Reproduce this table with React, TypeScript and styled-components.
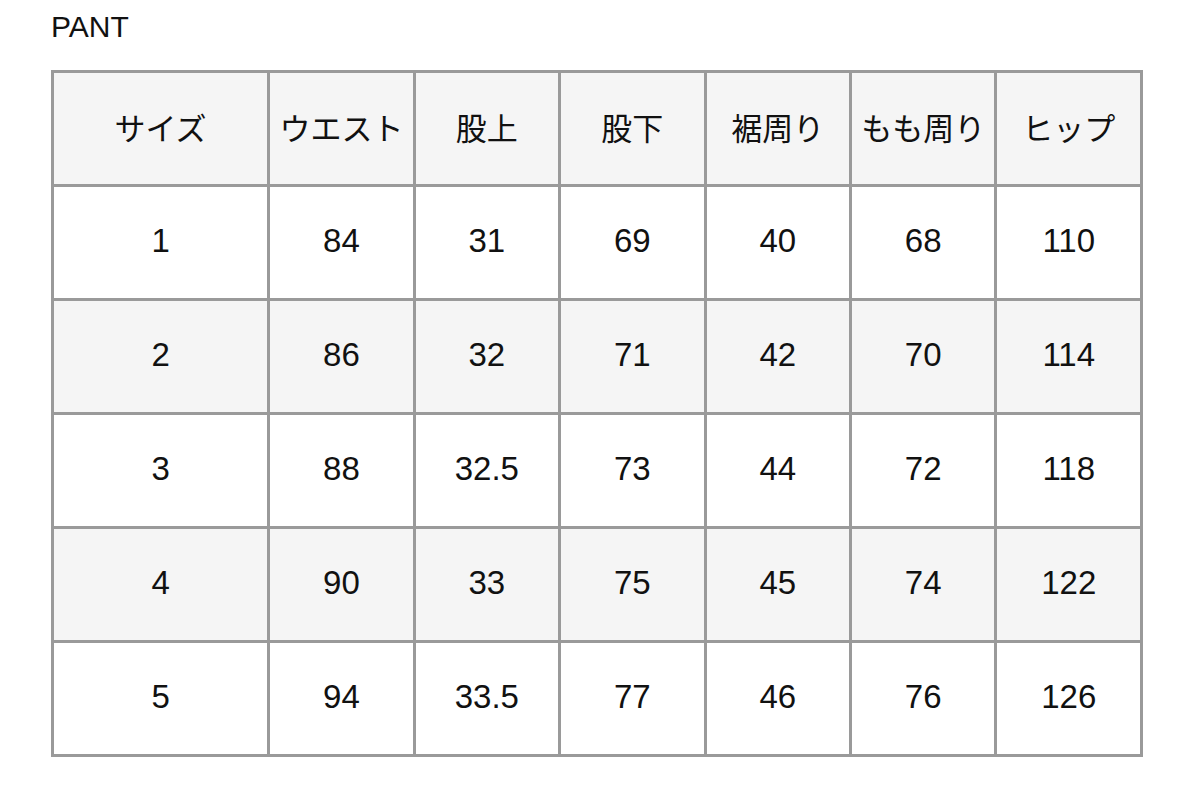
import React from 'react';
import styled, { createGlobalStyle } from 'styled-components';

const GlobalStyle = createGlobalStyle`
    body {
        margin: 0;
        background: #ffffff;
        font-family: "Liberation Sans", Arial, "Noto Sans CJK JP", sans-serif;
        color: #111111;
    }
`;

const StyledPage = styled.div`
    padding: 10px 51px 0 51px;
`;

const StyledTitle = styled.h2`
    margin: 0 0 27px 0;
    font-size: 30px;
    line-height: 33px;
    font-weight: 400;
`;

const StyledTable = styled.table`
    width: 1092px;
    border-collapse: collapse;
    table-layout: fixed;
    border: 3px solid #9a9a9a;
`;

const StyledRow = styled.tr<{ $shaded?: boolean }>`
    height: 114px;
    background: ${(p) => (p.$shaded ? '#f5f5f5' : '#ffffff')};
`;

const StyledCell = styled.td<{ $wide?: boolean }>`
    width: ${(p) => (p.$wide ? '19.96%' : '13.34%')};
    border: 3px solid #9a9a9a;
    padding: 0 0 3px 0;
    text-align: center;
    vertical-align: middle;
    font-size: 33px;
    font-weight: 400;
    white-space: nowrap;
`;

const StyledHeadCell = styled(StyledCell).attrs({ as: 'th' })`
    font-weight: 400;
    font-size: 31px;
    padding: 0 0 5px 0;
`;

const headers = ['サイズ', 'ウエスト', '股上', '股下', '裾周り', 'もも周り', 'ヒップ'];

const rows = [
    ['1', '84', '31', '69', '40', '68', '110'],
    ['2', '86', '32', '71', '42', '70', '114'],
    ['3', '88', '32.5', '73', '44', '72', '118'],
    ['4', '90', '33', '75', '45', '74', '122'],
    ['5', '94', '33.5', '77', '46', '76', '126'],
];

export default function App() {
    return (
        <>
            <GlobalStyle />
            <StyledPage>
                <StyledTitle>PANT</StyledTitle>
                <StyledTable>
                    <thead>
                        <StyledRow $shaded>
                            {headers.map((h, i) => (
                                <StyledHeadCell key={h} $wide={i === 0}>{h}</StyledHeadCell>
                            ))}
                        </StyledRow>
                    </thead>
                    <tbody>
                        {rows.map((r, ri) => (
                            <StyledRow key={r[0]} $shaded={ri % 2 === 1}>
                                {r.map((v, i) => (
                                    <StyledCell key={i} $wide={i === 0}>{v}</StyledCell>
                                ))}
                            </StyledRow>
                        ))}
                    </tbody>
                </StyledTable>
            </StyledPage>
        </>
    );
}
